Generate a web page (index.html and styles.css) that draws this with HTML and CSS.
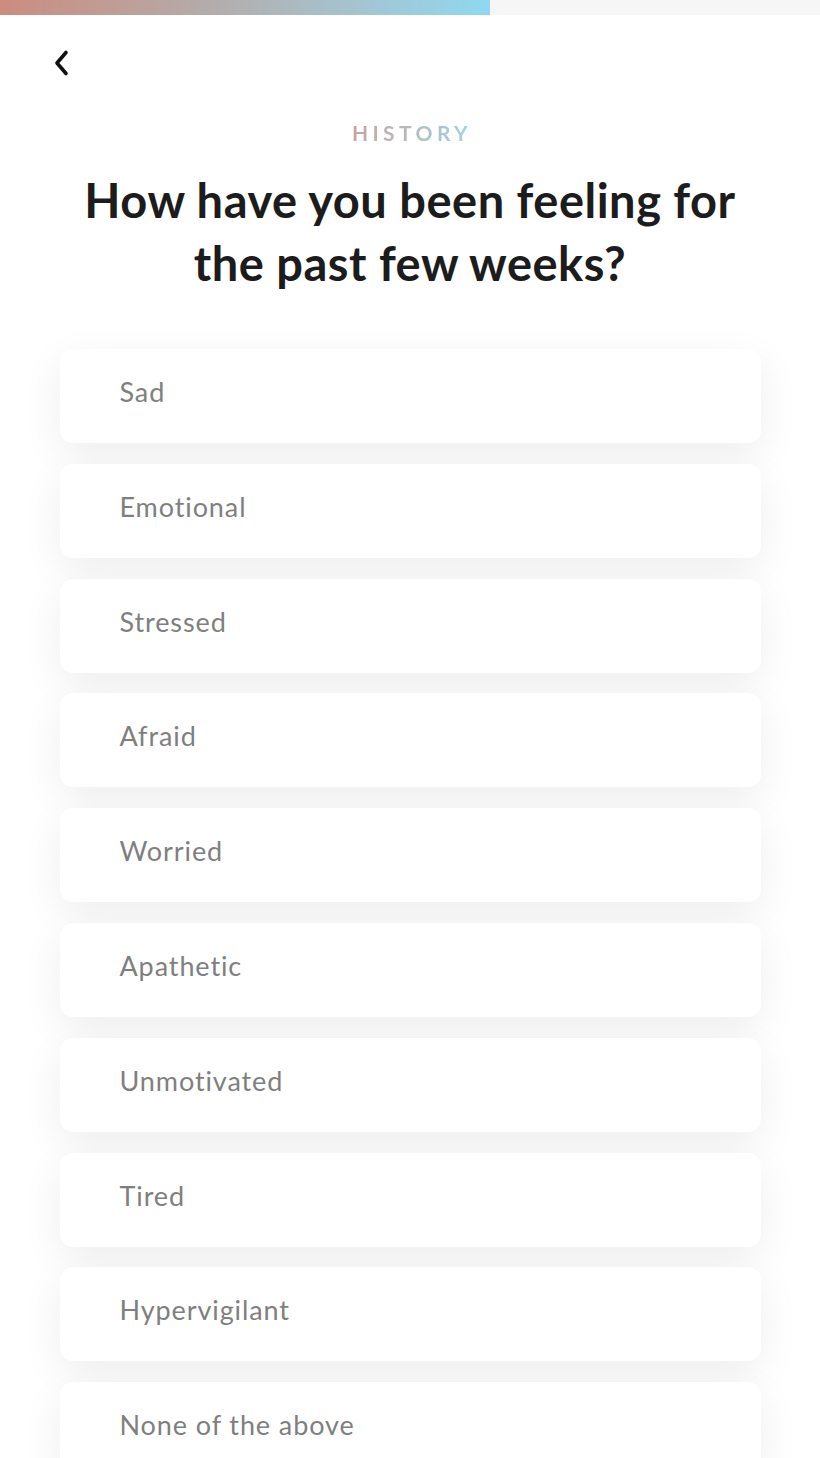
FILE: index.html
```html
<!DOCTYPE html>
<html lang="en">
<head>
<meta charset="utf-8">
<title>History</title>
<link rel="stylesheet" href="styles.css">
</head>
<body>
<div class="progress"><div class="progress-fill"></div></div>
<header class="topbar">
  <button class="back" aria-label="Back">
    <svg width="20" height="28" viewBox="0 0 20 28"><path d="M15 3.5 L6 14 L15 24.5" fill="none" stroke="#111" stroke-width="3.6" stroke-linecap="round" stroke-linejoin="round"/></svg>
  </button>
</header>
<main class="content">
  <div class="eyebrow">HISTORY</div>
  <h1 class="title">How have you been feeling for the past few weeks?</h1>
  <ul class="options">
    <li class="option">Sad</li>
    <li class="option">Emotional</li>
    <li class="option">Stressed</li>
    <li class="option">Afraid</li>
    <li class="option">Worried</li>
    <li class="option">Apathetic</li>
    <li class="option">Unmotivated</li>
    <li class="option">Tired</li>
    <li class="option">Hypervigilant</li>
    <li class="option">None of the above</li>
  </ul>
</main>
</body>
</html>
```
FILE: styles.css
```css
html, body {
  margin: 0;
  padding: 0;
  background: #ffffff;
  font-family: "Lato", "Open Sans", sans-serif;
  overflow: hidden;
}
.progress {
  height: 15px;
  background: #f6f6f6;
}
.progress-fill {
  width: 490px;
  height: 100%;
  background: linear-gradient(90deg, #cc8c7f 0%, #b5aaa8 40%, #a6c2cd 70%, #8fd9ee 100%);
}
.topbar {
  height: 82px;
  padding-left: 51px;
  display: flex;
  align-items: center;
}
.back {
  background: none;
  border: 0;
  padding: 0;
  margin-top: 14px;
  width: 24px;
  height: 28px;
  display: flex;
  align-items: center;
}
.content {
  display: flex;
  flex-direction: column;
  align-items: center;
}
.eyebrow {
  margin-top: 21px;
  font-size: 21px;
  font-weight: 700;
  letter-spacing: 4.4px;
  padding-left: 4px;
  line-height: 30px;
  background: linear-gradient(90deg, #c9a39c, #9ed3e2);
  -webkit-background-clip: text;
  background-clip: text;
  color: transparent;
}
.title {
  margin: 21px 0 0;
  width: 690px;
  text-align: center;
  font-size: 47px;
  line-height: 63px;
  font-weight: 700;
  color: #1c1c1c;
  letter-spacing: 0.5px;
}
.options {
  list-style: none;
  margin: 54px 0 0;
  padding: 0;
  width: 701px;
  display: flex;
  flex-direction: column;
  gap: 20.8px;
}
.option {
  height: 94px;
  box-sizing: border-box;
  padding-left: 60px;
  padding-bottom: 9px;
  display: flex;
  align-items: center;
  background: #fff;
  border-radius: 13px;
  box-shadow: 0 12px 40px rgba(0, 0, 0, 0.07);
  font-size: 27px;
  color: #7f7f7f;
  letter-spacing: 0.9px;
}
```
